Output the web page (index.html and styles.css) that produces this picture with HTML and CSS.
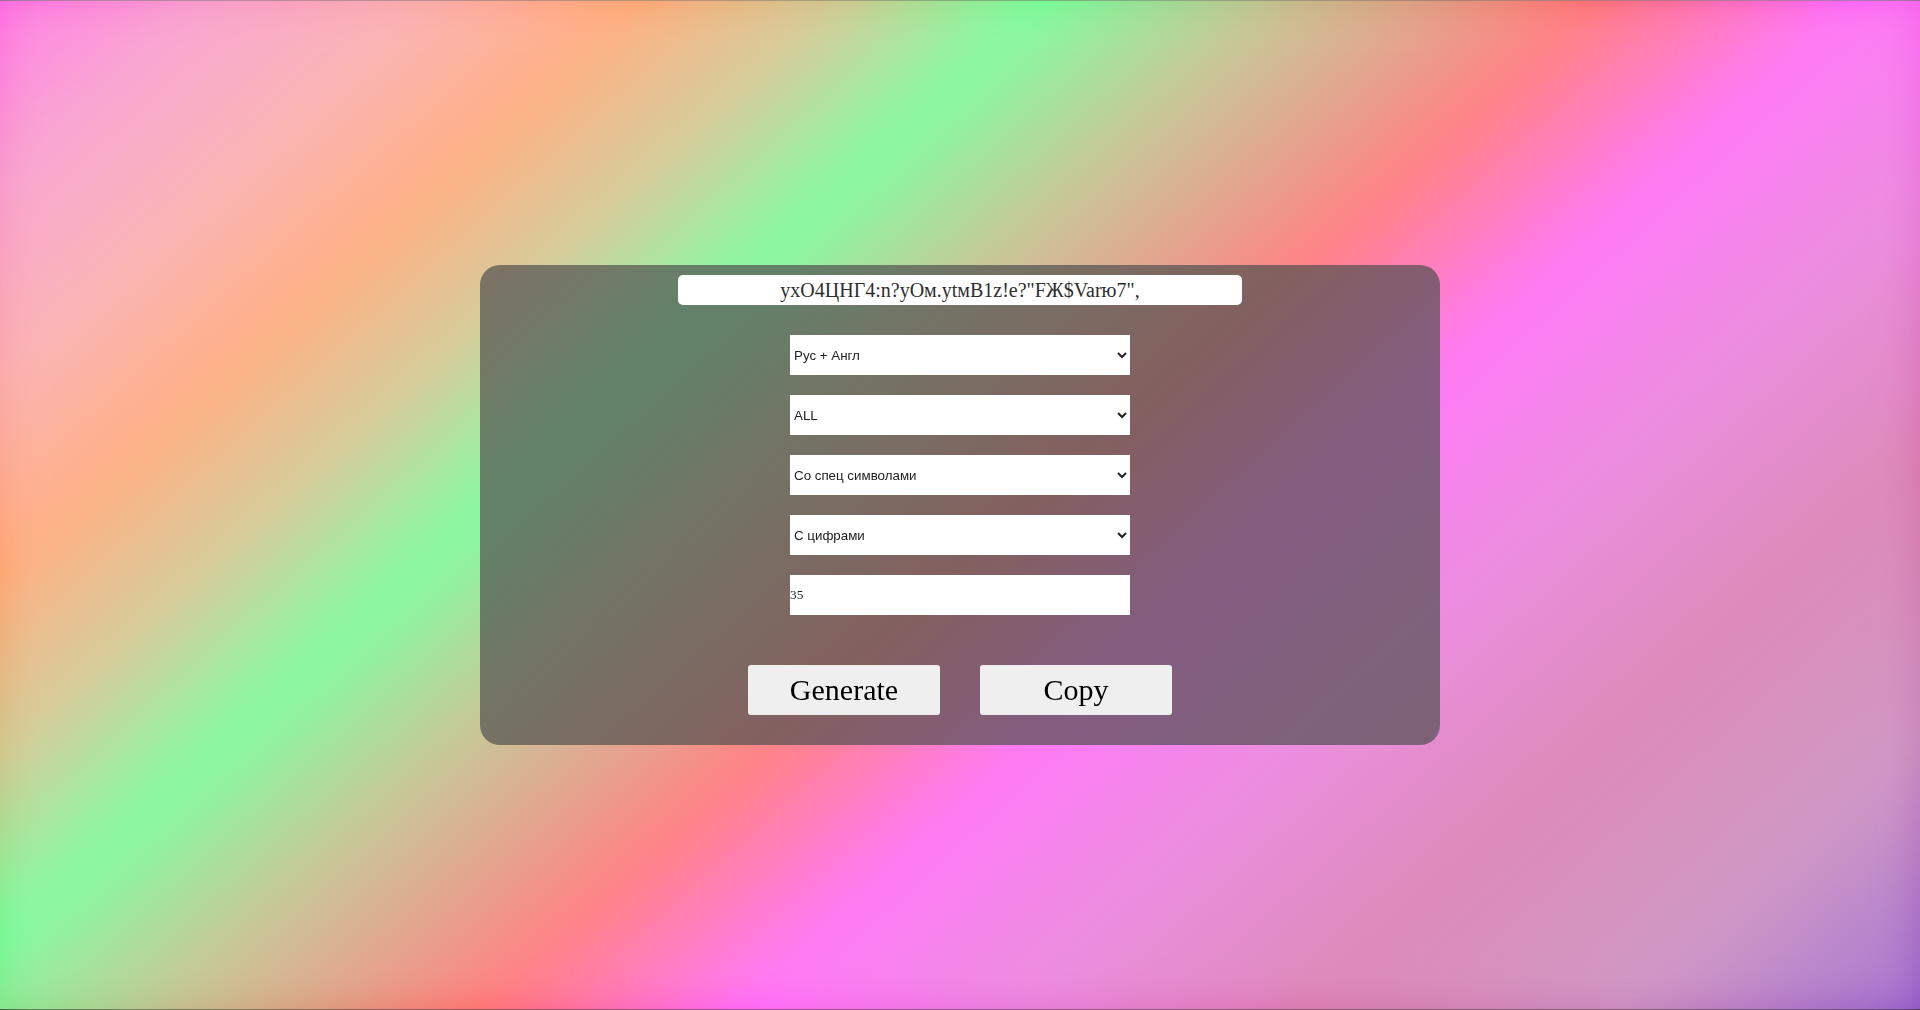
FILE: index.html
```html
<!DOCTYPE html>
<html lang="ru">
<head>
<meta charset="utf-8">
<title>Password generator</title>
<link rel="stylesheet" href="styles.css">
</head>
<body>
  <main class="card">
    <div class="output">yxO4ЦНГ4:n?yOм.ytмB1z!e?"FЖ$Varю7",</div>
    <div class="controls">
      <select class="field">
        <option>Рус + Англ</option>
        <option>Рус</option>
        <option>Англ</option>
      </select>
      <select class="field">
        <option>ALL</option>
        <option>UPPER</option>
        <option>lower</option>
      </select>
      <select class="field">
        <option>Со спец символами</option>
        <option>Без спец символов</option>
      </select>
      <select class="field">
        <option>С цифрами</option>
        <option>Без цифр</option>
      </select>
      <input class="field num" type="text" value="35">
    </div>
    <div class="buttons">
      <button class="btn">Generate</button>
      <button class="btn">Copy</button>
    </div>
  </main>
</body>
</html>
```

FILE: styles.css
```css
html, body {
  margin: 0;
  padding: 0;
}

body {
  box-sizing: border-box;
  height: 100vh;
  border-top: 1px solid #6f6a6f;
  border-bottom: 1px solid #2a2a2a;
  display: flex;
  align-items: center;
  justify-content: center;
  overflow: hidden;
  background: linear-gradient(138deg,
    #ff5ee0 0%,
    #f78fc4 7%,
    #f9a0a0 14%,
    #ff9a62 21%,
    #c8c080 28%,
    #62fb88 34.5%,
    #b8b87c 42%,
    #d89070 47%,
    #ff6060 52.5%,
    #ff55f5 61%,
    #e66ed6 70%,
    #d36aa5 80%,
    #c37cb5 90%,
    #8d4fc4 100%);
  font-family: "Liberation Serif", serif;
}

body::before {
  content: "";
  position: fixed;
  inset: 0;
  z-index: 0;
  background:
    linear-gradient(rgba(255, 255, 255, 0.22), rgba(255, 255, 255, 0.22)),
    linear-gradient(138deg,
      #ff5ee0 0%,
      #f78fc4 7%,
      #f9a0a0 14%,
      #ff9a62 21%,
      #c8c080 28%,
      #62fb88 34.5%,
      #b8b87c 42%,
      #d89070 47%,
      #ff6060 52.5%,
      #ff55f5 61%,
      #e66ed6 70%,
      #d36aa5 80%,
      #c37cb5 90%,
      #8d4fc4 100%);
  filter: blur(22px);
}

.card {
  position: relative;
  z-index: 1;
  box-sizing: border-box;
  width: 960px;
  padding: 10px 0 30px;
  border-radius: 20px;
  background: rgba(80, 80, 80, 0.7);
  display: flex;
  flex-direction: column;
  align-items: center;
}

.output {
  box-sizing: border-box;
  width: 564px;
  height: 30px;
  background: #ffffff;
  border-radius: 5px;
  color: #2e2e2e;
  font-family: "Liberation Serif", serif;
  font-size: 20px;
  line-height: 30px;
  text-align: center;
  white-space: nowrap;
}

.controls {
  margin-top: 30px;
  display: flex;
  flex-direction: column;
  gap: 20px;
}

.field {
  box-sizing: border-box;
  width: 340px;
  height: 40px;
  margin: 0;
  border: none;
  border-radius: 0;
  background-color: #ffffff;
  color: #222222;
  font-family: "Liberation Sans", Arial, sans-serif;
  font-size: 13.333px;
  outline: none;
}

.num {
  padding: 0;
  font-family: "Liberation Serif", serif;
  font-size: 13.333px;
  color: #222222;
}

.buttons {
  margin-top: 50px;
  display: flex;
  gap: 40px;
}

.btn {
  width: 192px;
  height: 50px;
  border: none;
  border-radius: 3px;
  background: #efefef;
  color: #000000;
  font-family: "Liberation Serif", serif;
  font-size: 30px;
  padding: 0;
  cursor: pointer;
}
```
